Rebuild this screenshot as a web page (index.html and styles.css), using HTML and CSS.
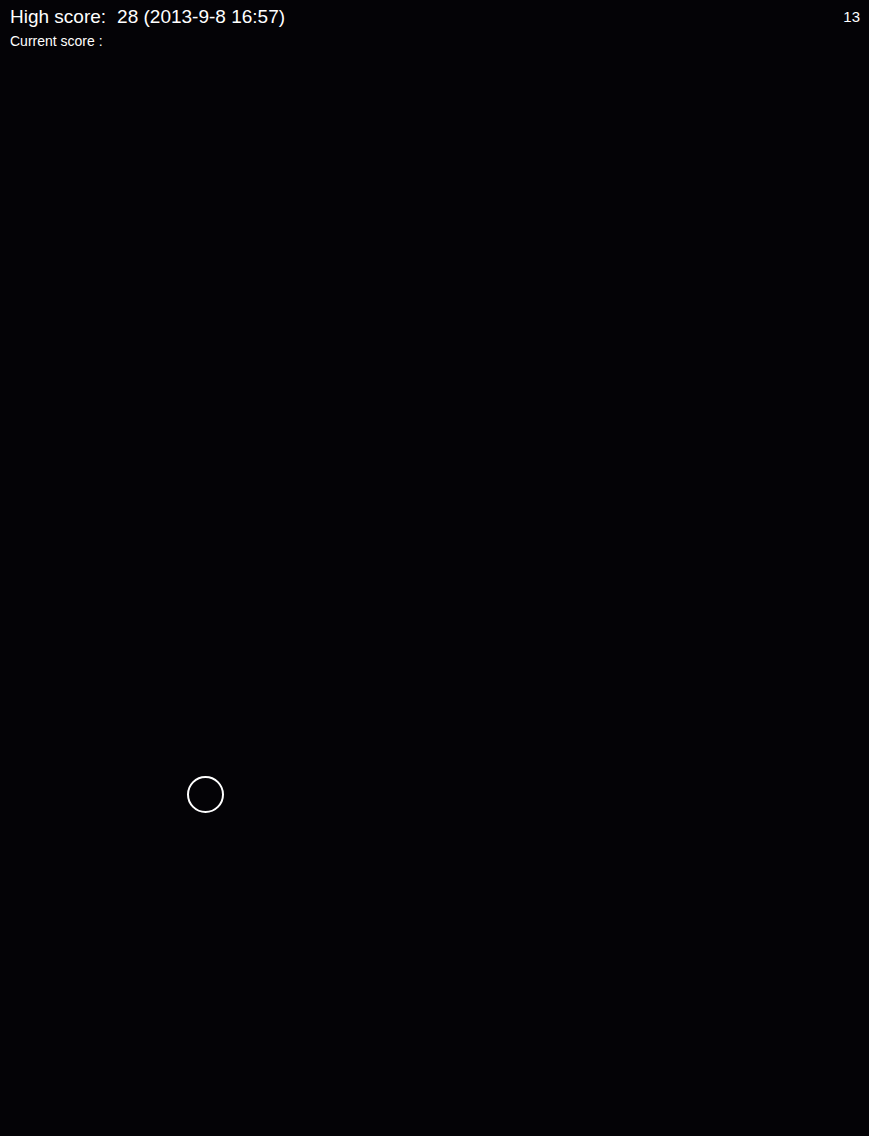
FILE: index.html
```html
<!DOCTYPE html>
<html>
<head>
<meta charset="utf-8">
<link rel="stylesheet" href="styles.css">
</head>
<body>
<div class="game">
  <header class="hud">
    <div class="scores">
      <div class="high">
        <span class="high-label">High score:</span>
        <span class="high-value">28 (2013-9-8 16:57)</span>
      </div>
      <div class="current">Current score :</div>
    </div>
    <div class="counter">13</div>
  </header>
  <div class="target"></div>
</div>
</body>
</html>
```
FILE: styles.css
```css
html, body {
  margin: 0;
  padding: 0;
  background: #040306;
  height: 100%;
}
.game {
  position: relative;
  width: 869px;
  height: 1136px;
  overflow: hidden;
  color: #ffffff;
  font-family: "Liberation Sans", Arial, sans-serif;
}
.hud {
  display: flex;
  justify-content: space-between;
  align-items: flex-start;
  padding: 5px 9px 0 10px;
}
.high {
  display: flex;
  gap: 11px;
  font-size: 19px;
  line-height: 24px;
}
.current {
  font-size: 14px;
  line-height: 16px;
  margin-top: 4px;
}
.counter {
  font-size: 15px;
  line-height: 20px;
  margin-top: 2px;
}
.target {
  position: absolute;
  left: 187px;
  top: 776px;
  width: 33px;
  height: 33px;
  border: 2px solid #ffffff;
  border-radius: 50%;
}
```
